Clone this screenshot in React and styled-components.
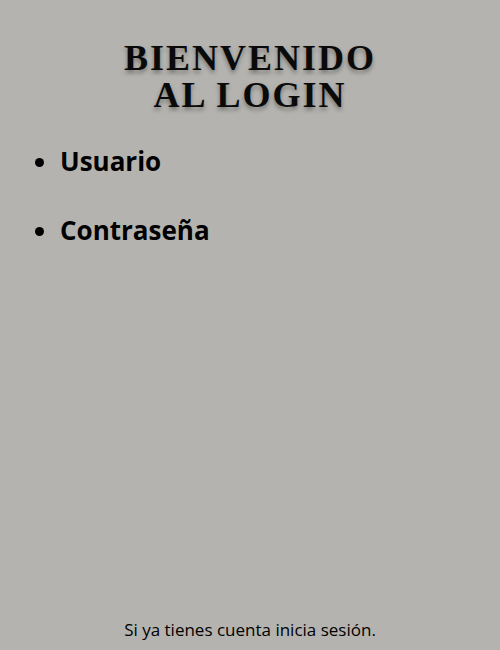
import React from "react";
import styled, { createGlobalStyle } from "styled-components";

const Global = createGlobalStyle`
  html, body { margin: 0; padding: 0; background: #b4b3af; }
  body { font-family: "Open Sans", "Liberation Sans", sans-serif; color: #000; }
`;

const Page = styled.div`
  min-height: 650px;
  display: flex;
  flex-direction: column;
  box-sizing: border-box;
`;

const Title = styled.h1`
  margin: 40px 0 0;
  text-align: center;
  font-family: "Liberation Serif", "DejaVu Serif", serif;
  font-weight: 700;
  font-size: 36px;
  line-height: 37px;
  letter-spacing: 2px;
  color: #0a0a0a;
  text-shadow: 0 3px 4px rgba(0, 0, 0, 0.35);
`;

const List = styled.ul`
  margin: 30px 0 0;
  padding: 0 0 0 60px;
  display: flex;
  flex-direction: column;
  gap: 34px;
`;

const Item = styled.li`
  font-size: 26px;
  font-weight: 700;
  line-height: 35px;
`;

const Footer = styled.p`
  margin: auto 0 9px;
  text-align: center;
  font-size: 17px;
  line-height: 23px;
`;

export default function App() {
  return (
    <Page>
      <Global />
      <Title>
        BIENVENIDO
        <br />
        AL LOGIN
      </Title>
      <List>
        <Item>Usuario</Item>
        <Item>Contraseña</Item>
      </List>
      <Footer>Si ya tienes cuenta inicia sesión.</Footer>
    </Page>
  );
}
